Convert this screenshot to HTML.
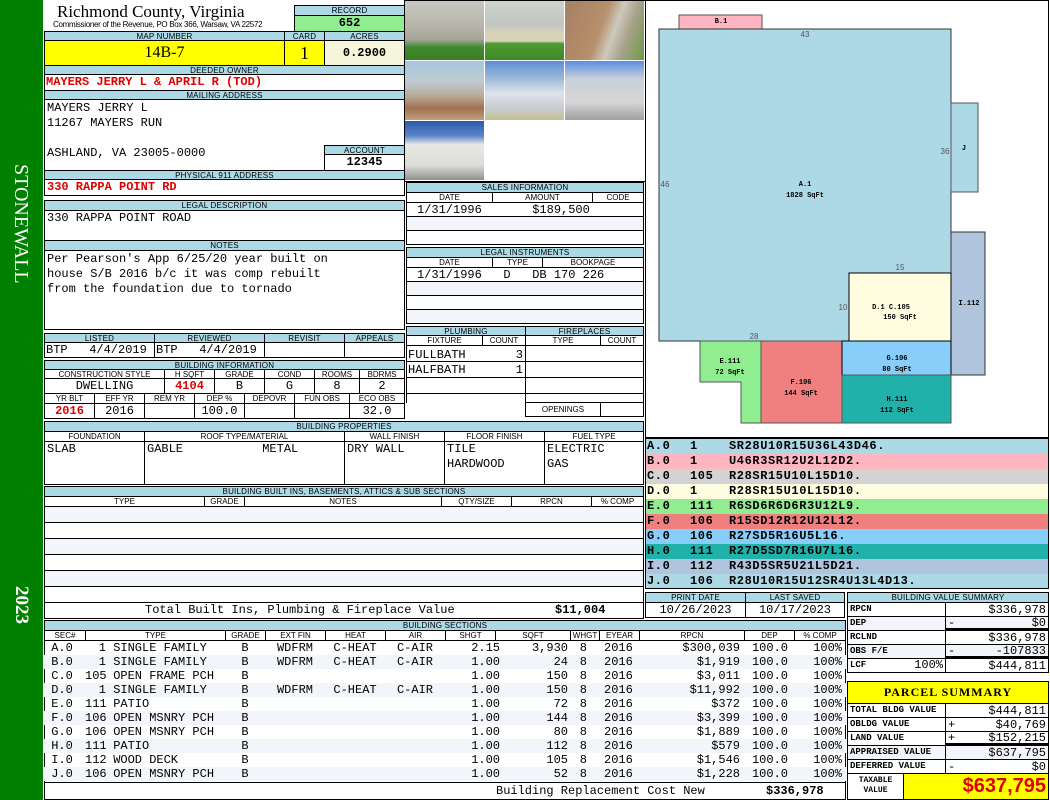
<!DOCTYPE html>
<html><head><meta charset="utf-8">
<style>
*{margin:0;padding:0}
body{width:1050px;height:800px;position:relative;background:#fff;overflow:hidden;font-family:"Liberation Mono",monospace;font-size:12px;color:#000}
.a{position:absolute;box-sizing:border-box;overflow:hidden;white-space:nowrap}
.h{position:absolute;box-sizing:border-box;overflow:hidden;white-space:nowrap;background:#add8e6;border:1px solid #000;font:8px/9px "Liberation Sans",sans-serif;text-align:center;letter-spacing:.2px}
.s{position:absolute;box-sizing:border-box;overflow:hidden;white-space:nowrap;background:#fff;border:1px solid #000;font:8px/9px "Liberation Sans",sans-serif;text-align:center}
.c{position:absolute;box-sizing:border-box;overflow:hidden;white-space:nowrap;border:1px solid #000;font:12px/14px "Liberation Mono",monospace;padding:0 2px}
.r{color:#e00000;font-weight:bold}
.alt{background:#f2f5f9}
.lb{font-size:9px !important;font-weight:bold;line-height:13px !important}
.v{text-align:left;font-size:12px}
.v span{float:right}
table.bs{position:absolute;left:44px;top:641px;width:802px;border-collapse:collapse;table-layout:fixed;font:12px/14px "Liberation Mono",monospace}
table.bs td{height:14px;padding:0;white-space:nowrap;overflow:hidden}
table.bs tr:nth-child(even){background:#f2f5f9}
.sk div{height:15px;position:relative}
.sk b{position:absolute;top:0}
</style></head><body>
<!-- green bar -->
<div class="a" style="left:0;top:0;width:43px;height:800px;background:#008000"></div>
<div class="a" style="left:9px;top:164px;width:24px;height:160px;writing-mode:vertical-rl;color:#fff;font:20px/24px 'Liberation Serif',serif">STONEWALL</div>
<div class="a" style="left:9px;top:586px;width:24px;height:40px;writing-mode:vertical-rl;color:#fff;font:bold 19px/24px 'Liberation Serif',serif">2023</div>

<!-- header -->
<div class="a" style="left:57px;top:2px;font:17px/20px 'Liberation Serif',serif">Richmond County, Virginia</div>
<div class="a" style="left:53px;top:20px;font:8px/9px 'Liberation Sans',sans-serif;letter-spacing:-.3px">Commissioner of the Revenue, PO Box 366, Warsaw, VA 22572</div>
<div class="h" style="left:294px;top:5px;width:111px;height:11px">RECORD</div>
<div class="c" style="left:294px;top:15px;width:111px;height:17px;background:#90ee90;text-align:center;font-weight:bold;line-height:15px">652</div>
<div class="h" style="left:44px;top:31px;width:241px;height:10px">MAP NUMBER</div>
<div class="h" style="left:284px;top:31px;width:41px;height:10px">CARD</div>
<div class="h" style="left:324px;top:31px;width:81px;height:10px">ACRES</div>
<div class="c" style="left:44px;top:40px;width:241px;height:26px;background:#ffff00;text-align:center;font:16px/24px 'Liberation Serif',serif">14B-7</div>
<div class="c" style="left:284px;top:40px;width:41px;height:26px;background:#ffff00;text-align:center;font:18px/24px 'Liberation Serif',serif">1</div>
<div class="c" style="left:324px;top:40px;width:81px;height:26px;background:#f5f5dc;text-align:center;font-weight:bold;line-height:24px">0.2900</div>
<div class="h" style="left:44px;top:65px;width:361px;height:10px">DEEDED OWNER</div>
<div class="c r" style="left:44px;top:74px;width:361px;height:17px;line-height:15px;padding-left:1px">MAYERS JERRY L &amp; APRIL R (TOD)</div>
<div class="h" style="left:44px;top:90px;width:361px;height:10px">MAILING ADDRESS</div>
<div class="c" style="left:44px;top:99px;width:361px;height:72px;line-height:15px;padding-top:1px">MAYERS JERRY L<br>11267 MAYERS RUN<br><br>ASHLAND, VA 23005-0000</div>
<div class="h" style="left:324px;top:145px;width:81px;height:10px">ACCOUNT</div>
<div class="c" style="left:324px;top:154px;width:81px;height:17px;background:#fff;text-align:center;font-weight:bold;line-height:15px">12345</div>
<div class="h" style="left:44px;top:170px;width:361px;height:10px">PHYSICAL 911 ADDRESS</div>
<div class="c r" style="left:44px;top:179px;width:361px;height:17px;line-height:15px">330 RAPPA POINT RD</div>
<div class="h" style="left:44px;top:200px;width:361px;height:11px">LEGAL DESCRIPTION</div>
<div class="c" style="left:44px;top:210px;width:361px;height:31px;line-height:15px">330 RAPPA POINT ROAD</div>
<div class="h" style="left:44px;top:240px;width:361px;height:11px">NOTES</div>
<div class="c" style="left:44px;top:250px;width:361px;height:80px;line-height:15px;padding-top:1px">Per Pearson's App 6/25/20 year built on<br>house S/B 2016 b/c it was comp rebuilt<br>from the foundation due to tornado</div>

<!-- listed -->
<div class="h" style="left:44px;top:333px;width:111px;height:10px">LISTED</div>
<div class="h" style="left:154px;top:333px;width:111px;height:10px">REVIEWED</div>
<div class="h" style="left:264px;top:333px;width:81px;height:10px">REVISIT</div>
<div class="h" style="left:344px;top:333px;width:61px;height:10px">APPEALS</div>
<div class="c" style="left:44px;top:342px;width:111px;height:16px;padding:0 0 0 1px">BTP&nbsp;&nbsp;&nbsp;4/4/2019</div>
<div class="c" style="left:154px;top:342px;width:111px;height:16px;padding:0 0 0 1px">BTP&nbsp;&nbsp;&nbsp;4/4/2019</div>
<div class="c" style="left:264px;top:342px;width:81px;height:16px"></div>
<div class="c" style="left:344px;top:342px;width:61px;height:16px"></div>

<!-- building info -->
<div class="h" style="left:44px;top:360px;width:361px;height:10px">BUILDING INFORMATION</div>
<div class="s" style="left:44px;top:369px;width:121px;height:10px">CONSTRUCTION STYLE</div>
<div class="s" style="left:164px;top:369px;width:51px;height:10px">H SQFT</div>
<div class="s" style="left:214px;top:369px;width:51px;height:10px">GRADE</div>
<div class="s" style="left:264px;top:369px;width:51px;height:10px">COND</div>
<div class="s" style="left:314px;top:369px;width:46px;height:10px">ROOMS</div>
<div class="s" style="left:359px;top:369px;width:46px;height:10px">BDRMS</div>
<div class="c" style="left:44px;top:378px;width:121px;height:16px;text-align:center">DWELLING</div>
<div class="c r" style="left:164px;top:378px;width:51px;height:16px;text-align:center">4104</div>
<div class="c" style="left:214px;top:378px;width:51px;height:16px;text-align:center">B</div>
<div class="c" style="left:264px;top:378px;width:51px;height:16px;text-align:center">G</div>
<div class="c" style="left:314px;top:378px;width:46px;height:16px;text-align:center">8</div>
<div class="c" style="left:359px;top:378px;width:46px;height:16px;text-align:center">2</div>
<div class="s" style="left:44px;top:393px;width:51px;height:11px">YR BLT</div>
<div class="s" style="left:94px;top:393px;width:51px;height:11px">EFF YR</div>
<div class="s" style="left:144px;top:393px;width:51px;height:11px">REM YR</div>
<div class="s" style="left:194px;top:393px;width:51px;height:11px">DEP %</div>
<div class="s" style="left:244px;top:393px;width:51px;height:11px">DEPOVR</div>
<div class="s" style="left:294px;top:393px;width:56px;height:11px">FUN OBS</div>
<div class="s" style="left:349px;top:393px;width:56px;height:11px">ECO OBS</div>
<div class="c r" style="left:44px;top:403px;width:51px;height:16px;text-align:center">2016</div>
<div class="c" style="left:94px;top:403px;width:51px;height:16px;text-align:center">2016</div>
<div class="c" style="left:144px;top:403px;width:51px;height:16px"></div>
<div class="c" style="left:194px;top:403px;width:51px;height:16px;text-align:center">100.0</div>
<div class="c" style="left:244px;top:403px;width:51px;height:16px"></div>
<div class="c" style="left:294px;top:403px;width:56px;height:16px"></div>
<div class="c" style="left:349px;top:403px;width:56px;height:16px;text-align:center">32.0</div>

<!-- photos -->
<div class="a" style="left:404px;top:0;width:242px;height:182px;border:1px solid #000;background:#fff"></div>
<div class="a" style="left:405px;top:1px;width:79px;height:59px;background:linear-gradient(#c8c8c4 0%,#bdbbb0 30%,#a8a49a 65%,#3f8a2e 78%,#3a7e28 100%)"></div>
<div class="a" style="left:485px;top:1px;width:79px;height:59px;background:linear-gradient(#cfd3d0 0%,#c2c6c0 40%,#d8d2b8 55%,#d8d2b8 68%,#4c9a30 72%,#3f8a26 100%)"></div>
<div class="a" style="left:565px;top:1px;width:79px;height:59px;background:linear-gradient(110deg,#a58062 0%,#b7906c 45%,#cdc9bd 60%,#a7a28a 75%,#6e9a46 100%)"></div>
<div class="a" style="left:405px;top:61px;width:79px;height:59px;background:linear-gradient(#a7c4e0 0%,#c0cbd0 35%,#b8a896 60%,#a07050 80%,#c0a080 100%)"></div>
<div class="a" style="left:485px;top:61px;width:79px;height:59px;background:linear-gradient(#5b8fd6 0%,#9fb9d9 30%,#dfe3ea 55%,#c8ccd2 80%,#c4c090 100%)"></div>
<div class="a" style="left:565px;top:61px;width:79px;height:59px;background:linear-gradient(#5a8ee0 0%,#c8d0da 30%,#d6d6d6 70%,#a0a0a0 100%)"></div>
<div class="a" style="left:405px;top:121px;width:79px;height:59px;background:linear-gradient(#2a5aa8 0%,#5a86c8 25%,#e8e8e4 40%,#dcdcd8 75%,#909090 100%)"></div>

<!-- sales -->
<div class="h" style="left:406px;top:182px;width:238px;height:11px">SALES INFORMATION</div>
<div class="s" style="left:406px;top:192px;width:87px;height:11px">DATE</div>
<div class="s" style="left:492px;top:192px;width:101px;height:11px">AMOUNT</div>
<div class="s" style="left:592px;top:192px;width:52px;height:11px">CODE</div>
<div class="c" style="left:406px;top:202px;width:238px;height:15px;padding-left:10px">1/31/1996&nbsp;&nbsp;&nbsp;&nbsp;&nbsp;&nbsp;&nbsp;$189,500</div>
<div class="c alt" style="left:406px;top:216px;width:238px;height:15px"></div>
<div class="c" style="left:406px;top:230px;width:238px;height:15px"></div>
<div class="h" style="left:406px;top:247px;width:238px;height:11px">LEGAL INSTRUMENTS</div>
<div class="s" style="left:406px;top:257px;width:87px;height:11px">DATE</div>
<div class="s" style="left:492px;top:257px;width:51px;height:11px">TYPE</div>
<div class="s" style="left:542px;top:257px;width:102px;height:11px">BOOKPAGE</div>
<div class="c" style="left:406px;top:267px;width:238px;height:15px;padding-left:10px">1/31/1996&nbsp;&nbsp;&nbsp;D&nbsp;&nbsp;&nbsp;DB 170 226</div>
<div class="c alt" style="left:406px;top:281px;width:238px;height:15px"></div>
<div class="c" style="left:406px;top:295px;width:238px;height:15px"></div>
<div class="c alt" style="left:406px;top:309px;width:238px;height:15px"></div>

<!-- plumbing -->
<div class="h" style="left:406px;top:326px;width:120px;height:10px">PLUMBING</div>
<div class="h" style="left:525px;top:326px;width:119px;height:10px">FIREPLACES</div>
<div class="s" style="left:406px;top:335px;width:77px;height:11px">FIXTURE</div>
<div class="s" style="left:482px;top:335px;width:44px;height:11px">COUNT</div>
<div class="s" style="left:525px;top:335px;width:76px;height:11px">TYPE</div>
<div class="s" style="left:600px;top:335px;width:44px;height:11px">COUNT</div>
<div class="c" style="left:406px;top:345px;width:120px;height:17px;padding:2px 2px 0 1px">FULLBATH<span style="float:right">3</span></div>
<div class="c" style="left:406px;top:361px;width:120px;height:17px;padding:1px 2px 0 1px">HALFBATH<span style="float:right">1</span></div>
<div class="c" style="left:406px;top:377px;width:120px;height:17px"></div>
<div class="c" style="left:406px;top:393px;width:120px;height:10px;border-bottom:none"></div>
<div class="c" style="left:525px;top:345px;width:119px;height:17px"></div>
<div class="c" style="left:525px;top:361px;width:119px;height:17px"></div>
<div class="c" style="left:525px;top:377px;width:119px;height:17px"></div>
<div class="c" style="left:525px;top:393px;width:119px;height:10px"></div>
<div class="s" style="left:525px;top:402px;width:76px;height:15px;line-height:13px">OPENINGS</div>
<div class="c" style="left:600px;top:402px;width:44px;height:15px"></div>

<!-- building properties -->
<div class="h" style="left:44px;top:421px;width:600px;height:11px">BUILDING PROPERTIES</div>
<div class="s" style="left:44px;top:431px;width:101px;height:11px">FOUNDATION</div>
<div class="s" style="left:144px;top:431px;width:201px;height:11px">ROOF TYPE/MATERIAL</div>
<div class="s" style="left:344px;top:431px;width:101px;height:11px">WALL FINISH</div>
<div class="s" style="left:444px;top:431px;width:101px;height:11px">FLOOR FINISH</div>
<div class="s" style="left:544px;top:431px;width:100px;height:11px">FUEL TYPE</div>
<div class="c" style="left:44px;top:441px;width:101px;height:44px;line-height:15px">SLAB</div>
<div class="c" style="left:144px;top:441px;width:201px;height:44px;line-height:15px">GABLE&nbsp;&nbsp;&nbsp;&nbsp;&nbsp;&nbsp;&nbsp;&nbsp;&nbsp;&nbsp;&nbsp;METAL</div>
<div class="c" style="left:344px;top:441px;width:101px;height:44px;line-height:15px">DRY WALL</div>
<div class="c" style="left:444px;top:441px;width:101px;height:44px;line-height:15px">TILE<br>HARDWOOD</div>
<div class="c" style="left:544px;top:441px;width:100px;height:44px;line-height:15px">ELECTRIC<br>GAS</div>

<!-- built ins -->
<div class="h" style="left:44px;top:486px;width:600px;height:11px">BUILDING BUILT INS, BASEMENTS, ATTICS &amp; SUB SECTIONS</div>
<div class="s" style="left:44px;top:496px;width:161px;height:11px">TYPE</div>
<div class="s" style="left:204px;top:496px;width:41px;height:11px">GRADE</div>
<div class="s" style="left:244px;top:496px;width:198px;height:11px">NOTES</div>
<div class="s" style="left:441px;top:496px;width:71px;height:11px">QTY/SIZE</div>
<div class="s" style="left:511px;top:496px;width:81px;height:11px">RPCN</div>
<div class="s" style="left:591px;top:496px;width:53px;height:11px">% COMP</div>
<div class="c alt" style="left:44px;top:506px;width:600px;height:17px"></div>
<div class="c" style="left:44px;top:522px;width:600px;height:17px"></div>
<div class="c alt" style="left:44px;top:538px;width:600px;height:17px"></div>
<div class="c" style="left:44px;top:554px;width:600px;height:17px"></div>
<div class="c alt" style="left:44px;top:570px;width:600px;height:17px"></div>
<div class="c" style="left:44px;top:586px;width:600px;height:17px;border-bottom:none"></div>
<div class="c" style="left:44px;top:602px;width:600px;height:17px;line-height:15px;padding-left:100px">Total Built Ins, Plumbing &amp; Fireplace Value<span style="position:absolute;left:510px;font-weight:bold">$11,004</span></div>

<!-- print date -->
<div class="h" style="left:645px;top:592px;width:101px;height:11px">PRINT DATE</div>
<div class="h" style="left:745px;top:592px;width:100px;height:11px">LAST SAVED</div>
<div class="c" style="left:645px;top:602px;width:101px;height:16px;text-align:center">10/26/2023</div>
<div class="c" style="left:745px;top:602px;width:100px;height:16px;text-align:center">10/17/2023</div>

<!-- building sections -->
<div class="h" style="left:44px;top:620px;width:802px;height:11px">BUILDING SECTIONS</div>
<div class="s" style="left:44px;top:630px;width:42px;height:11px">SEC#</div>
<div class="s" style="left:85px;top:630px;width:141px;height:11px">TYPE</div>
<div class="s" style="left:225px;top:630px;width:41px;height:11px">GRADE</div>
<div class="s" style="left:265px;top:630px;width:61px;height:11px">EXT FIN</div>
<div class="s" style="left:325px;top:630px;width:61px;height:11px">HEAT</div>
<div class="s" style="left:385px;top:630px;width:61px;height:11px">AIR</div>
<div class="s" style="left:445px;top:630px;width:51px;height:11px">SHGT</div>
<div class="s" style="left:495px;top:630px;width:76px;height:11px">SQFT</div>
<div class="s" style="left:570px;top:630px;width:30px;height:11px">WHGT</div>
<div class="s" style="left:599px;top:630px;width:41px;height:11px">EYEAR</div>
<div class="s" style="left:639px;top:630px;width:106px;height:11px">RPCN</div>
<div class="s" style="left:744px;top:630px;width:51px;height:11px">DEP</div>
<div class="s" style="left:794px;top:630px;width:52px;height:11px">% COMP</div>
<div class="a" style="left:44px;top:640px;width:802px;height:160px;border:1px solid #000;border-top:none"></div>
<table class="bs">
<colgroup><col style="width:41px"><col style="width:21px"><col style="width:119px"><col style="width:40px"><col style="width:60px"><col style="width:60px"><col style="width:60px"><col style="width:60px"><col style="width:65px"><col style="width:20px"><col style="width:50px"><col style="width:105px"><col style="width:50px"><col style="width:51px"></colgroup>
<tr><td>&nbsp;A.0</td><td style="text-align:right">1</td><td>&nbsp;SINGLE FAMILY</td><td style="text-align:center">B</td><td style="text-align:center">WDFRM</td><td style="text-align:center">C-HEAT</td><td style="text-align:center">C-AIR</td><td style="text-align:right;padding-right:5px">2.15</td><td style="text-align:right;padding-right:2px">3,930</td><td style="text-align:right;padding-right:3px">8</td><td style="padding-left:14px">2016</td><td style="text-align:right;padding-right:5px">$300,039</td><td style="text-align:center">100.0</td><td style="text-align:right;padding-right:4px">100%</td></tr>
<tr><td>&nbsp;B.0</td><td style="text-align:right">1</td><td>&nbsp;SINGLE FAMILY</td><td style="text-align:center">B</td><td style="text-align:center">WDFRM</td><td style="text-align:center">C-HEAT</td><td style="text-align:center">C-AIR</td><td style="text-align:right;padding-right:5px">1.00</td><td style="text-align:right;padding-right:2px">24</td><td style="text-align:right;padding-right:3px">8</td><td style="padding-left:14px">2016</td><td style="text-align:right;padding-right:5px">$1,919</td><td style="text-align:center">100.0</td><td style="text-align:right;padding-right:4px">100%</td></tr>
<tr><td>&nbsp;C.0</td><td style="text-align:right">105</td><td>&nbsp;OPEN FRAME PCH</td><td style="text-align:center">B</td><td></td><td></td><td></td><td style="text-align:right;padding-right:5px">1.00</td><td style="text-align:right;padding-right:2px">150</td><td style="text-align:right;padding-right:3px">8</td><td style="padding-left:14px">2016</td><td style="text-align:right;padding-right:5px">$3,011</td><td style="text-align:center">100.0</td><td style="text-align:right;padding-right:4px">100%</td></tr>
<tr><td>&nbsp;D.0</td><td style="text-align:right">1</td><td>&nbsp;SINGLE FAMILY</td><td style="text-align:center">B</td><td style="text-align:center">WDFRM</td><td style="text-align:center">C-HEAT</td><td style="text-align:center">C-AIR</td><td style="text-align:right;padding-right:5px">1.00</td><td style="text-align:right;padding-right:2px">150</td><td style="text-align:right;padding-right:3px">8</td><td style="padding-left:14px">2016</td><td style="text-align:right;padding-right:5px">$11,992</td><td style="text-align:center">100.0</td><td style="text-align:right;padding-right:4px">100%</td></tr>
<tr><td>&nbsp;E.0</td><td style="text-align:right">111</td><td>&nbsp;PATIO</td><td style="text-align:center">B</td><td></td><td></td><td></td><td style="text-align:right;padding-right:5px">1.00</td><td style="text-align:right;padding-right:2px">72</td><td style="text-align:right;padding-right:3px">8</td><td style="padding-left:14px">2016</td><td style="text-align:right;padding-right:5px">$372</td><td style="text-align:center">100.0</td><td style="text-align:right;padding-right:4px">100%</td></tr>
<tr><td>&nbsp;F.0</td><td style="text-align:right">106</td><td>&nbsp;OPEN MSNRY PCH</td><td style="text-align:center">B</td><td></td><td></td><td></td><td style="text-align:right;padding-right:5px">1.00</td><td style="text-align:right;padding-right:2px">144</td><td style="text-align:right;padding-right:3px">8</td><td style="padding-left:14px">2016</td><td style="text-align:right;padding-right:5px">$3,399</td><td style="text-align:center">100.0</td><td style="text-align:right;padding-right:4px">100%</td></tr>
<tr><td>&nbsp;G.0</td><td style="text-align:right">106</td><td>&nbsp;OPEN MSNRY PCH</td><td style="text-align:center">B</td><td></td><td></td><td></td><td style="text-align:right;padding-right:5px">1.00</td><td style="text-align:right;padding-right:2px">80</td><td style="text-align:right;padding-right:3px">8</td><td style="padding-left:14px">2016</td><td style="text-align:right;padding-right:5px">$1,889</td><td style="text-align:center">100.0</td><td style="text-align:right;padding-right:4px">100%</td></tr>
<tr><td>&nbsp;H.0</td><td style="text-align:right">111</td><td>&nbsp;PATIO</td><td style="text-align:center">B</td><td></td><td></td><td></td><td style="text-align:right;padding-right:5px">1.00</td><td style="text-align:right;padding-right:2px">112</td><td style="text-align:right;padding-right:3px">8</td><td style="padding-left:14px">2016</td><td style="text-align:right;padding-right:5px">$579</td><td style="text-align:center">100.0</td><td style="text-align:right;padding-right:4px">100%</td></tr>
<tr><td>&nbsp;I.0</td><td style="text-align:right">112</td><td>&nbsp;WOOD DECK</td><td style="text-align:center">B</td><td></td><td></td><td></td><td style="text-align:right;padding-right:5px">1.00</td><td style="text-align:right;padding-right:2px">105</td><td style="text-align:right;padding-right:3px">8</td><td style="padding-left:14px">2016</td><td style="text-align:right;padding-right:5px">$1,546</td><td style="text-align:center">100.0</td><td style="text-align:right;padding-right:4px">100%</td></tr>
<tr><td>&nbsp;J.0</td><td style="text-align:right">106</td><td>&nbsp;OPEN MSNRY PCH</td><td style="text-align:center">B</td><td></td><td></td><td></td><td style="text-align:right;padding-right:5px">1.00</td><td style="text-align:right;padding-right:2px">52</td><td style="text-align:right;padding-right:3px">8</td><td style="padding-left:14px">2016</td><td style="text-align:right;padding-right:5px">$1,228</td><td style="text-align:center">100.0</td><td style="text-align:right;padding-right:4px">100%</td></tr>
</table>
<div class="a" style="left:44px;top:782px;width:802px;height:1px;background:#000"></div>
<div class="a" style="left:496px;top:784px;font:12px/14px 'Liberation Mono',monospace">Building Replacement Cost New</div>
<div class="a" style="left:766px;top:784px;font:bold 12px/14px 'Liberation Mono',monospace">$336,978</div>

<!-- sketch -->
<div class="a" style="left:645px;top:0;width:404px;height:438px;border:1px solid #000;background:#fff">
<svg width="404" height="438" viewBox="645 0 404 438" style="position:absolute;left:-1px;top:-1px" font-family="Liberation Mono,monospace" font-size="7" font-weight="bold" text-anchor="middle">
<rect x="679" y="15" width="83" height="14" fill="#ffb6c1" stroke="#555"/>
<rect x="659" y="29" width="292" height="312" fill="#add8e6" stroke="#333"/>
<rect x="951" y="103" width="27" height="89" fill="#add8e6" stroke="#555"/>
<rect x="951" y="232" width="34" height="143" fill="#b0c4de" stroke="#333"/>
<rect x="849" y="273" width="102" height="68" fill="#fffde0" stroke="#000"/>
<polygon points="700,341 761,341 761,423 741,423 741,382 700,382" fill="#90ee90" stroke="#555"/>
<rect x="761" y="341" width="81" height="82" fill="#f08080" stroke="#555"/>
<rect x="842" y="341" width="109" height="34" fill="#87cefa" stroke="#000"/>
<rect x="842" y="375" width="109" height="48" fill="#20b2aa" stroke="#555"/>
<text x="721" y="23">B.1</text>
<text x="805" y="186">A.1</text><text x="805" y="197">1828 SqFt</text>
<text x="964" y="150">J</text>
<text x="969" y="305">I.112</text>
<text x="891" y="309">D.1 C.105</text><text x="900" y="319">150 SqFt</text>
<text x="730" y="363">E.111</text><text x="730" y="374">72 SqFt</text>
<text x="801" y="384">F.106</text><text x="801" y="395">144 SqFt</text>
<text x="897" y="360">G.106</text><text x="897" y="371">80 SqFt</text>
<text x="897" y="401">H.111</text><text x="897" y="412">112 SqFt</text>
<g font-family="Liberation Sans,sans-serif" font-weight="normal" font-size="8" fill="#555">
<text x="805" y="37">43</text><text x="665" y="187">46</text><text x="945" y="154">36</text>
<text x="900" y="270">15</text><text x="843" y="310">10</text><text x="754" y="339">28</text></g>
</svg></div>

<!-- sketch codes -->
<div class="a sk" style="left:645px;top:438px;width:404px;height:151px;font:bold 12px/15px 'Liberation Mono',monospace;border:1px solid #000;letter-spacing:.6px">
<div style="background:#add8e6"><b style="left:1px">A.0</b><b style="left:44px">1</b><b style="left:83px">SR28U10R15U36L43D46.</b></div>
<div style="background:#ffb6c1"><b style="left:1px">B.0</b><b style="left:44px">1</b><b style="left:83px">U46R3SR12U2L12D2.</b></div>
<div style="background:#d3d3d3"><b style="left:1px">C.0</b><b style="left:44px">105</b><b style="left:83px">R28SR15U10L15D10.</b></div>
<div style="background:#fffde0"><b style="left:1px">D.0</b><b style="left:44px">1</b><b style="left:83px">R28SR15U10L15D10.</b></div>
<div style="background:#90ee90"><b style="left:1px">E.0</b><b style="left:44px">111</b><b style="left:83px">R6SD6R6D6R3U12L9.</b></div>
<div style="background:#f08080"><b style="left:1px">F.0</b><b style="left:44px">106</b><b style="left:83px">R15SD12R12U12L12.</b></div>
<div style="background:#87cefa"><b style="left:1px">G.0</b><b style="left:44px">106</b><b style="left:83px">R27SD5R16U5L16.</b></div>
<div style="background:#20b2aa"><b style="left:1px">H.0</b><b style="left:44px">111</b><b style="left:83px">R27D5SD7R16U7L16.</b></div>
<div style="background:#b0c4de"><b style="left:1px">I.0</b><b style="left:44px">112</b><b style="left:83px">R43D5SR5U21L5D21.</b></div>
<div style="background:#add8e6"><b style="left:1px">J.0</b><b style="left:44px">106</b><b style="left:83px">R28U10R15U12SR4U13L4D13.</b></div>
</div>

<!-- building value summary -->
<div class="h" style="left:847px;top:592px;width:202px;height:11px">BUILDING VALUE SUMMARY</div>
<div class="c lb" style="left:847px;top:602px;width:99px;height:15px">RPCN</div>
<div class="c v" style="left:945px;top:602px;width:104px;height:15px"><span>$336,978</span></div>
<div class="c alt lb" style="left:847px;top:616px;width:99px;height:15px">DEP</div>
<div class="c alt v" style="left:945px;top:616px;width:104px;height:15px;border-bottom:3px solid #000;line-height:12px">-<span>$0</span></div>
<div class="c lb" style="left:847px;top:630px;width:99px;height:15px">RCLND</div>
<div class="c v" style="left:945px;top:630px;width:104px;height:15px"><span>$336,978</span></div>
<div class="c alt lb" style="left:847px;top:644px;width:99px;height:15px">OBS F/E</div>
<div class="c alt v" style="left:945px;top:644px;width:104px;height:15px;border-bottom:3px solid #000;line-height:12px">-<span>-107833</span></div>
<div class="c lb" style="left:847px;top:658px;width:99px;height:15px">LCF<span style="float:right;font-size:12px;font-weight:normal">100%</span></div>
<div class="c v" style="left:945px;top:658px;width:104px;height:15px"><span>$444,811</span></div>

<!-- parcel summary -->
<div class="c" style="left:847px;top:681px;width:202px;height:23px;background:#ffff00;text-align:center;font:bold 12px/21px 'Liberation Serif',serif;letter-spacing:1px">PARCEL SUMMARY</div>
<div class="c lb" style="left:847px;top:703px;width:99px;height:15px">TOTAL BLDG VALUE</div>
<div class="c v" style="left:945px;top:703px;width:104px;height:15px"><span>$444,811</span></div>
<div class="c lb" style="left:847px;top:717px;width:99px;height:15px">OBLDG VALUE</div>
<div class="c v" style="left:945px;top:717px;width:104px;height:15px">+<span>$40,769</span></div>
<div class="c lb" style="left:847px;top:731px;width:99px;height:15px">LAND VALUE</div>
<div class="c v" style="left:945px;top:731px;width:104px;height:15px;border-bottom:3px solid #000;line-height:12px">+<span>$152,215</span></div>
<div class="c alt lb" style="left:847px;top:745px;width:99px;height:15px">APPRAISED VALUE</div>
<div class="c alt v" style="left:945px;top:745px;width:104px;height:15px"><span>$637,795</span></div>
<div class="c lb" style="left:847px;top:759px;width:99px;height:15px">DEFERRED VALUE</div>
<div class="c v" style="left:945px;top:759px;width:104px;height:15px">-<span>$0</span></div>
<div class="c" style="left:847px;top:773px;width:57px;height:27px;font:bold 8px/10px 'Liberation Mono',monospace;text-align:center;padding-top:2px">TAXABLE<br>VALUE</div>
<div class="c" style="left:903px;top:773px;width:146px;height:27px;background:#ffff00;text-align:right;color:#e00000;font:bold 20px/25px 'Liberation Sans',sans-serif">$637,795</div>
</body></html>
